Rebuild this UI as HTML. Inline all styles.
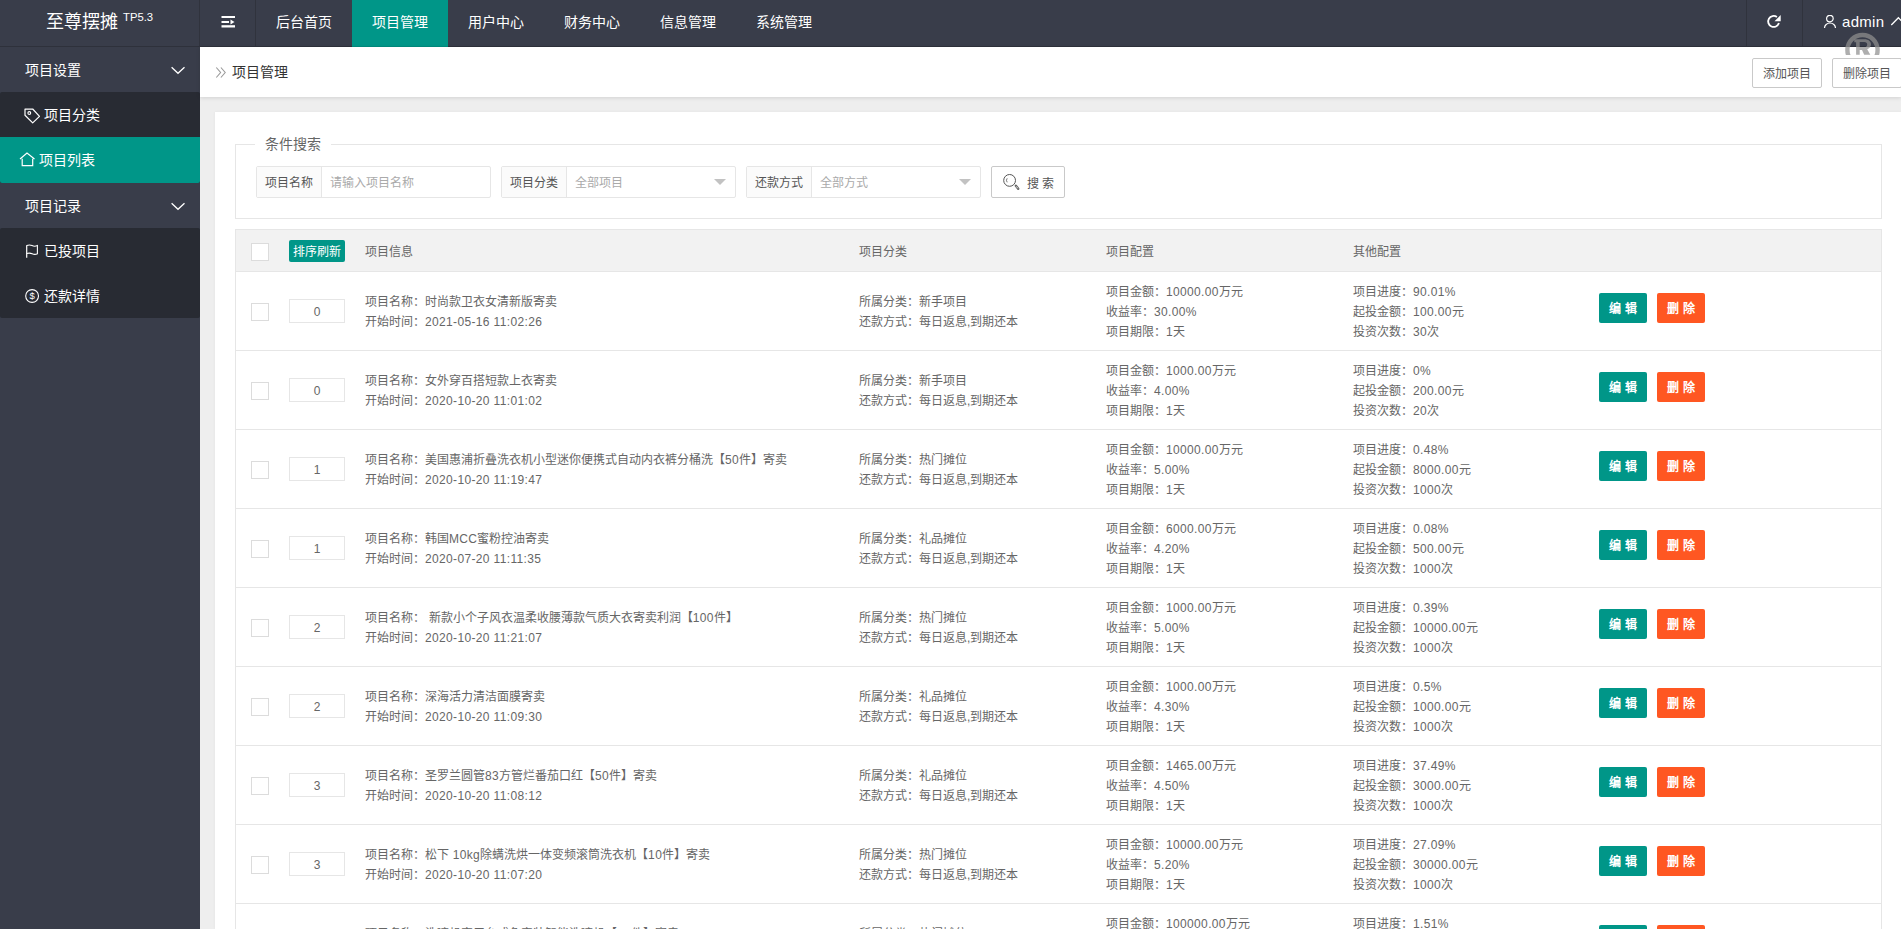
<!DOCTYPE html>
<html lang="zh-CN"><head><meta charset="utf-8">
<style>
*{margin:0;padding:0;box-sizing:border-box}
html,body{width:1901px;height:929px;overflow:hidden}
body{font-family:"Liberation Sans",sans-serif;background:#eeeeee;position:relative;color:#666}
.abs{position:absolute}
svg{position:absolute;overflow:hidden}
#hdr{position:absolute;left:0;top:0;width:1901px;height:47px;background:#393d4a;border-bottom:1px solid #2e313b}
#logo{position:absolute;left:0;top:0;width:200px;height:46px;border-right:1px solid #30333d}
#logo .t{position:absolute;left:46px;top:11px;font-size:18px;color:#fff;line-height:22px;white-space:nowrap}
#logo sup{position:absolute;left:77px;top:-5px;font-size:11.3px}
.nav{position:absolute;top:0;height:46px;width:96px;line-height:44px;font-size:14px;color:#fff;text-align:center}
.nav.on{background:#009688;height:47px;border-bottom:1px solid #008b7e}
#side{position:absolute;left:0;top:47px;width:200px;height:882px;background:#393d4a}
.mi{position:absolute;left:0;width:200px;height:45px;line-height:47px;font-size:14px;color:#fff}
.dl{position:absolute;left:0;width:200px;background:#282b33;border-radius:2px;overflow:hidden}
#bar{position:absolute;left:200px;top:47px;width:1701px;height:50px;background:#fff;box-shadow:0 1px 4px rgba(0,0,0,.12)}
.tbtn{position:absolute;top:11px;height:30px;line-height:31px;border:1px solid #c9c9c9;border-radius:2px;background:#fff;font-size:12px;color:#555;text-align:center}
#card{position:absolute;left:215px;top:112px;width:1686px;height:817px;background:#fff;box-shadow:0 0 3px rgba(0,0,0,.05)}
#fs{position:absolute;left:20px;top:32px;width:1647px;height:75px;border:1px solid #e6e6e6}
#legend{position:absolute;left:40px;top:22px;padding:0 10px;background:#fff;font-size:14px;color:#666;line-height:20px}
.ig{position:absolute;top:54px;height:32px;border:1px solid #e6e6e6;border-radius:2px;background:#fff}
.ig .lb{position:absolute;left:0;top:0;height:30px;line-height:33px;background:#fbfbfb;border-right:1px solid #e6e6e6;font-size:12px;color:#555;text-align:center}
.ig .ph{position:absolute;top:0;line-height:33px;font-size:12px;color:#aaa}
.ig .arr{position:absolute;right:9px;top:12px;width:0;height:0;border-left:6px solid transparent;border-right:6px solid transparent;border-top:6px solid #c2c2c2}
#tbl{position:absolute;left:20px;top:117px;width:1647px;height:720px;border:1px solid #e6e6e6;border-bottom:none}
#th{position:absolute;left:0;top:0;width:1645px;height:42px;background:#f2f2f2;border-bottom:1px solid #e6e6e6}
.row{position:absolute;left:0;width:1645px;height:79px;border-bottom:1px solid #e6e6e6}
.cb{position:absolute;left:15px;width:18px;height:18px;border:1px solid #dcdcdc;background:#fff}
.c{position:absolute;font-size:12px;color:#666;line-height:20px;white-space:nowrap}
.n{letter-spacing:.35px}
.hc{position:absolute;top:12px;font-size:12px;color:#666;line-height:20px}
.sort{position:absolute;left:53px;width:56px;height:24px;border:1px solid #e6e6e6;line-height:24px;text-align:center;font-size:12px;color:#666}
.btn{position:absolute;width:48px;height:30px;line-height:33px;font-weight:bold;text-align:center;color:#fff;font-size:12px;border-radius:2px}
</style></head><body>
<div id="hdr">
  <div id="logo"><div class="t">至尊摆摊<sup>TP5.3</sup></div></div>
  <div class="abs" style="left:200px;top:0;width:56px;height:46px;border-right:1px solid #30333d"></div>
  <svg style="left:221px;top:15px" width="14" height="13" viewBox="0 0 14 13"><rect x="0.5" y="1" width="13.5" height="2" fill="#fff"/><rect x="0.5" y="6" width="7.5" height="2" fill="#fff"/><path d="M9.5 4.5L13.5 7L9.5 9.5Z" fill="#fff"/><rect x="0.5" y="10.2" width="13.5" height="2.3" fill="#fff"/></svg>
  <div class="nav" style="left:256px">后台首页</div>
  <div class="nav on" style="left:352px">项目管理</div>
  <div class="nav" style="left:448px">用户中心</div>
  <div class="nav" style="left:544px">财务中心</div>
  <div class="nav" style="left:640px">信息管理</div>
  <div class="nav" style="left:736px">系统管理</div>
  <div class="abs" style="left:1746px;top:0;width:1px;height:46px;background:#30333d"></div>
  <div class="abs" style="left:1802px;top:0;width:1px;height:46px;background:#30333d"></div>
  <svg style="left:1766px;top:14px" width="16" height="16" viewBox="0 0 16 16"><path d="M12.9 9.1 A5.5 5.5 0 1 1 10.9 3.0" fill="none" stroke="#fff" stroke-width="1.8"/><path d="M14.7 1 L14.7 7.2 L8.5 7.2Z" fill="#fff"/></svg>
  <svg style="left:1823px;top:15px" width="14" height="14" viewBox="0 0 14 14"><circle cx="6.9" cy="3.6" r="3.3" fill="none" stroke="#fff" stroke-width="1.2"/><path d="M1.5 13 A5.5 5 0 0 1 12.5 13" fill="none" stroke="#fff" stroke-width="1.2"/></svg>
  <div class="abs" style="left:1842px;top:0;line-height:44px;font-size:15px;color:#fff;letter-spacing:.3px">admin</div>
  <svg style="left:1890px;top:16px" width="11" height="11" viewBox="0 0 11 11"><path d="M1.3 9 L8.4 1.7 L15.5 9" fill="none" stroke="#fff" stroke-width="1.3"/></svg>
</div>
<div id="side">
  <div class="mi" style="top:0;padding-left:25px">项目设置</div>
  <svg style="left:171px;top:19px" width="14" height="9" viewBox="0 0 14 9"><path d="M0.6 1.3 L7 7.3 L13.5 1.3" fill="none" stroke="#fff" stroke-width="1.3"/></svg>
  <div class="dl" style="top:45px;height:91px">
    <div class="mi" style="top:0;padding-left:44px">项目分类</div>
    <svg style="left:24px;top:16px" width="17" height="16" viewBox="0 0 17 16"><path d="M1 1.2 L8.7 1 L15.5 8.4 L8.7 14.9 L1 7.3Z" fill="none" stroke="#fff" stroke-width="1.2" stroke-linejoin="round"/><circle cx="5.3" cy="5" r="1.4" fill="none" stroke="#fff" stroke-width="1.1"/></svg>
    <div class="mi" style="top:45px;height:46px;padding-left:39px;background:#009688">项目列表</div>
    <svg style="left:19px;top:60px" width="17" height="15" viewBox="0 0 17 15"><path d="M1 7 L8 1.1 L15.5 7 M3.2 6.8 V13.6 H13.7 V6.8" fill="none" stroke="#fff" stroke-width="1.2"/></svg>
  </div>
  <div class="mi" style="top:136px;padding-left:25px">项目记录</div>
  <svg style="left:171px;top:155px" width="14" height="9" viewBox="0 0 14 9"><path d="M0.6 1.3 L7 7.3 L13.5 1.3" fill="none" stroke="#fff" stroke-width="1.3"/></svg>
  <div class="dl" style="top:181px;height:90px">
    <div class="mi" style="top:0;padding-left:44px">已投项目</div>
    <svg style="left:25px;top:16px" width="14" height="15" viewBox="0 0 14 15"><path d="M1.7 1.3 V13.7" fill="none" stroke="#fff" stroke-width="1.2"/><path d="M1.7 1.6 Q4.5 0.4 7 1.6 T12.4 1.6 V9.8 Q9.8 11 7.2 9.8 T1.7 9.6" fill="none" stroke="#fff" stroke-width="1.1"/></svg>
    <div class="mi" style="top:45px;padding-left:44px">还款详情</div>
    <svg style="left:24px;top:60px" width="16" height="16" viewBox="0 0 16 16"><circle cx="8.1" cy="8" r="6.4" fill="none" stroke="#fff" stroke-width="1.1"/><text x="8.1" y="11.4" font-size="9.5" font-family="Liberation Sans" text-anchor="middle" fill="#fff">$</text></svg>
  </div>
</div>
<div id="bar">
  <svg style="left:15px;top:19px" width="12" height="13" viewBox="0 0 12 13"><path d="M1.3 1.5 L5.6 6.5 L1.3 11.5 M5.9 1.5 L10.2 6.5 L5.9 11.5" fill="none" stroke="#999" stroke-width="1.1"/></svg>
  <div class="abs" style="left:32px;top:14px;font-size:14px;color:#333;line-height:22px">项目管理</div>
  <div class="tbtn" style="left:1552px;width:70px">添加项目</div>
  <div class="tbtn" style="left:1632px;width:70px">删除项目</div>
</div>
<svg style="left:1843px;top:30px" width="40" height="25" viewBox="0 0 40 25"><circle cx="19.5" cy="20.1" r="15.1" fill="none" stroke="rgba(143,143,143,0.72)" stroke-width="4.4"/><path fill-rule="evenodd" fill="rgba(143,143,143,0.72)" d="M11.3 9.3 H21.5 C25.5 9.3 28 11.5 28 14.3 C28 16.8 26.3 18.6 24.2 19.2 L27.3 24.8 H21.2 L19 19.9 H16.7 V24.8 H13.1 V12.2 L11.3 12.2 Z M16.7 11.9 H21.2 C23.2 11.9 24.2 12.9 24.2 14.4 C24.2 15.9 23.2 17.1 21.2 17.1 H16.7 Z"/></svg>
<div id="card">
  <div id="fs"></div>
  <div id="legend">条件搜索</div>
  <div class="ig" style="left:41px;width:235px"><div class="lb" style="width:65px">项目名称</div><div class="ph" style="left:73px">请输入项目名称</div></div>
  <div class="ig" style="left:286px;width:235px"><div class="lb" style="width:65px">项目分类</div><div class="ph" style="left:73px">全部项目</div><div class="arr"></div></div>
  <div class="ig" style="left:531px;width:235px"><div class="lb" style="width:65px">还款方式</div><div class="ph" style="left:73px">全部方式</div><div class="arr"></div></div>
  <div class="ig" style="left:776px;width:74px;border-color:#c9c9c9">
    <svg style="left:10px;top:6px" width="18" height="18" viewBox="0 0 18 18"><circle cx="7.6" cy="7.4" r="5.9" fill="none" stroke="#555" stroke-width="1"/><path d="M13.9 12.8 L16.2 15.8" stroke="#666" stroke-width="2.4" stroke-linecap="round"/><path d="M14.3 13.4 L15.8 15.3" stroke="#fff" stroke-width="0.8"/><path d="M5.2 5.3 A3.2 3.2 0 0 0 5.2 9.3" fill="none" stroke="#555" stroke-width="0.8"/></svg>
    <div class="c" style="left:34.5px;top:6.5px;color:#555;letter-spacing:.3px">搜&nbsp;索</div></div>
  <div id="tbl">
    <div id="th">
      <div class="cb" style="top:13px"></div>
      <div class="abs" style="left:53px;top:10px;width:56px;height:22px;background:#009688;border-radius:2px;color:#fff;font-size:12px;line-height:25px;text-align:center">排序刷新</div>
      <div class="hc" style="left:129px">项目信息</div>
      <div class="hc" style="left:623px">项目分类</div>
      <div class="hc" style="left:870px">项目配置</div>
      <div class="hc" style="left:1117px">其他配置</div>
    </div>
<div class="row" style="top:42px"><div class="cb" style="top:31px"></div><div class="sort" style="top:27px">0</div><div class="c" style="left:129px;top:20px">项目名称：时尚款卫衣女清新版寄卖<br>开始时间：<span class="n">2021-05-16&nbsp;11:02:26</span></div><div class="c" style="left:623px;top:20px">所属分类：新手项目<br>还款方式：每日返息,到期还本</div><div class="c" style="left:870px;top:10px">项目金额：<span class="n">10000.00</span>万元<br>收益率：<span class="n">30.00%</span><br>项目期限：<span class="n">1</span>天</div><div class="c" style="left:1117px;top:10px">项目进度：<span class="n">90.01%</span><br>起投金额：<span class="n">100.00</span>元<br>投资次数：<span class="n">30</span>次</div><div class="btn" style="left:1363px;top:21px;background:#009688">编&nbsp;辑</div><div class="btn" style="left:1421px;top:21px;background:#ff5722">删&nbsp;除</div></div>
<div class="row" style="top:121px"><div class="cb" style="top:31px"></div><div class="sort" style="top:27px">0</div><div class="c" style="left:129px;top:20px">项目名称：女外穿百搭短款上衣寄卖<br>开始时间：<span class="n">2020-10-20&nbsp;11:01:02</span></div><div class="c" style="left:623px;top:20px">所属分类：新手项目<br>还款方式：每日返息,到期还本</div><div class="c" style="left:870px;top:10px">项目金额：<span class="n">1000.00</span>万元<br>收益率：<span class="n">4.00%</span><br>项目期限：<span class="n">1</span>天</div><div class="c" style="left:1117px;top:10px">项目进度：<span class="n">0%</span><br>起投金额：<span class="n">200.00</span>元<br>投资次数：<span class="n">20</span>次</div><div class="btn" style="left:1363px;top:21px;background:#009688">编&nbsp;辑</div><div class="btn" style="left:1421px;top:21px;background:#ff5722">删&nbsp;除</div></div>
<div class="row" style="top:200px"><div class="cb" style="top:31px"></div><div class="sort" style="top:27px">1</div><div class="c" style="left:129px;top:20px">项目名称：美国惠浦折叠洗衣机小型迷你便携式自动内衣裤分桶洗【<span class="n">50</span>件】寄卖<br>开始时间：<span class="n">2020-10-20&nbsp;11:19:47</span></div><div class="c" style="left:623px;top:20px">所属分类：热门摊位<br>还款方式：每日返息,到期还本</div><div class="c" style="left:870px;top:10px">项目金额：<span class="n">10000.00</span>万元<br>收益率：<span class="n">5.00%</span><br>项目期限：<span class="n">1</span>天</div><div class="c" style="left:1117px;top:10px">项目进度：<span class="n">0.48%</span><br>起投金额：<span class="n">8000.00</span>元<br>投资次数：<span class="n">1000</span>次</div><div class="btn" style="left:1363px;top:21px;background:#009688">编&nbsp;辑</div><div class="btn" style="left:1421px;top:21px;background:#ff5722">删&nbsp;除</div></div>
<div class="row" style="top:279px"><div class="cb" style="top:31px"></div><div class="sort" style="top:27px">1</div><div class="c" style="left:129px;top:20px">项目名称：韩国<span class="n">MCC</span>蜜粉控油寄卖<br>开始时间：<span class="n">2020-07-20&nbsp;11:11:35</span></div><div class="c" style="left:623px;top:20px">所属分类：礼品摊位<br>还款方式：每日返息,到期还本</div><div class="c" style="left:870px;top:10px">项目金额：<span class="n">6000.00</span>万元<br>收益率：<span class="n">4.20%</span><br>项目期限：<span class="n">1</span>天</div><div class="c" style="left:1117px;top:10px">项目进度：<span class="n">0.08%</span><br>起投金额：<span class="n">500.00</span>元<br>投资次数：<span class="n">1000</span>次</div><div class="btn" style="left:1363px;top:21px;background:#009688">编&nbsp;辑</div><div class="btn" style="left:1421px;top:21px;background:#ff5722">删&nbsp;除</div></div>
<div class="row" style="top:358px"><div class="cb" style="top:31px"></div><div class="sort" style="top:27px">2</div><div class="c" style="left:129px;top:20px">项目名称：<span class="n">&nbsp;</span>新款小个子风衣温柔收腰薄款气质大衣寄卖利润【<span class="n">100</span>件】<br>开始时间：<span class="n">2020-10-20&nbsp;11:21:07</span></div><div class="c" style="left:623px;top:20px">所属分类：热门摊位<br>还款方式：每日返息,到期还本</div><div class="c" style="left:870px;top:10px">项目金额：<span class="n">1000.00</span>万元<br>收益率：<span class="n">5.00%</span><br>项目期限：<span class="n">1</span>天</div><div class="c" style="left:1117px;top:10px">项目进度：<span class="n">0.39%</span><br>起投金额：<span class="n">10000.00</span>元<br>投资次数：<span class="n">1000</span>次</div><div class="btn" style="left:1363px;top:21px;background:#009688">编&nbsp;辑</div><div class="btn" style="left:1421px;top:21px;background:#ff5722">删&nbsp;除</div></div>
<div class="row" style="top:437px"><div class="cb" style="top:31px"></div><div class="sort" style="top:27px">2</div><div class="c" style="left:129px;top:20px">项目名称：深海活力清洁面膜寄卖<br>开始时间：<span class="n">2020-10-20&nbsp;11:09:30</span></div><div class="c" style="left:623px;top:20px">所属分类：礼品摊位<br>还款方式：每日返息,到期还本</div><div class="c" style="left:870px;top:10px">项目金额：<span class="n">1000.00</span>万元<br>收益率：<span class="n">4.30%</span><br>项目期限：<span class="n">1</span>天</div><div class="c" style="left:1117px;top:10px">项目进度：<span class="n">0.5%</span><br>起投金额：<span class="n">1000.00</span>元<br>投资次数：<span class="n">1000</span>次</div><div class="btn" style="left:1363px;top:21px;background:#009688">编&nbsp;辑</div><div class="btn" style="left:1421px;top:21px;background:#ff5722">删&nbsp;除</div></div>
<div class="row" style="top:516px"><div class="cb" style="top:31px"></div><div class="sort" style="top:27px">3</div><div class="c" style="left:129px;top:20px">项目名称：圣罗兰圆管<span class="n">83</span>方管烂番茄口红【<span class="n">50</span>件】寄卖<br>开始时间：<span class="n">2020-10-20&nbsp;11:08:12</span></div><div class="c" style="left:623px;top:20px">所属分类：礼品摊位<br>还款方式：每日返息,到期还本</div><div class="c" style="left:870px;top:10px">项目金额：<span class="n">1465.00</span>万元<br>收益率：<span class="n">4.50%</span><br>项目期限：<span class="n">1</span>天</div><div class="c" style="left:1117px;top:10px">项目进度：<span class="n">37.49%</span><br>起投金额：<span class="n">3000.00</span>元<br>投资次数：<span class="n">1000</span>次</div><div class="btn" style="left:1363px;top:21px;background:#009688">编&nbsp;辑</div><div class="btn" style="left:1421px;top:21px;background:#ff5722">删&nbsp;除</div></div>
<div class="row" style="top:595px"><div class="cb" style="top:31px"></div><div class="sort" style="top:27px">3</div><div class="c" style="left:129px;top:20px">项目名称：松下<span class="n">&nbsp;10kg</span>除螨洗烘一体变频滚筒洗衣机【<span class="n">10</span>件】寄卖<br>开始时间：<span class="n">2020-10-20&nbsp;11:07:20</span></div><div class="c" style="left:623px;top:20px">所属分类：热门摊位<br>还款方式：每日返息,到期还本</div><div class="c" style="left:870px;top:10px">项目金额：<span class="n">10000.00</span>万元<br>收益率：<span class="n">5.20%</span><br>项目期限：<span class="n">1</span>天</div><div class="c" style="left:1117px;top:10px">项目进度：<span class="n">27.09%</span><br>起投金额：<span class="n">30000.00</span>元<br>投资次数：<span class="n">1000</span>次</div><div class="btn" style="left:1363px;top:21px;background:#009688">编&nbsp;辑</div><div class="btn" style="left:1421px;top:21px;background:#ff5722">删&nbsp;除</div></div>
<div class="row" style="top:674px"><div class="cb" style="top:31px"></div><div class="sort" style="top:27px">4</div><div class="c" style="left:129px;top:20px">项目名称：洗碗机家用台式免安装智能洗碗机【<span class="n">20</span>件】寄卖<br>开始时间：<span class="n">2020-10-20&nbsp;11:05:11</span></div><div class="c" style="left:623px;top:20px">所属分类：热门摊位<br>还款方式：每日返息,到期还本</div><div class="c" style="left:870px;top:10px">项目金额：<span class="n">100000.00</span>万元<br>收益率：<span class="n">5.50%</span><br>项目期限：<span class="n">1</span>天</div><div class="c" style="left:1117px;top:10px">项目进度：<span class="n">1.51%</span><br>起投金额：<span class="n">50000.00</span>元<br>投资次数：<span class="n">1000</span>次</div><div class="btn" style="left:1363px;top:21px;background:#009688">编&nbsp;辑</div><div class="btn" style="left:1421px;top:21px;background:#ff5722">删&nbsp;除</div></div>
  </div>
</div>
</body></html>
